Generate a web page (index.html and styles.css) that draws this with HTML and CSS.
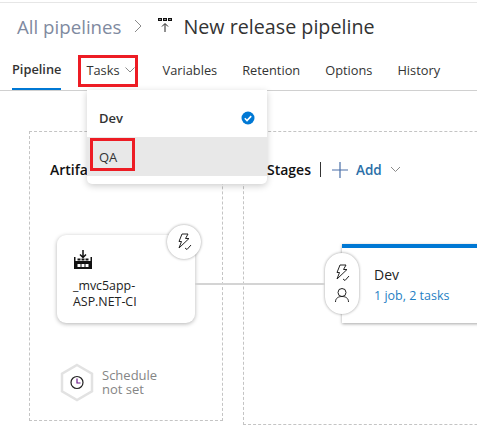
FILE: index.html
```html
<!DOCTYPE html>
<html lang="en">
<head>
  <meta charset="UTF-8">
  <title>New release pipeline</title>
  <link rel="stylesheet" href="styles.css">
</head>
<body>
  <div class="page">
    <header class="title-row">
      <span class="crumb">All pipelines</span>
      <svg class="crumb-sep" width="8" height="14" viewBox="0 0 8 14"><path d="M1 1l6 6-6 6" fill="none" stroke="#8a8a8a" stroke-width="1"/></svg>
      <svg class="title-icon" width="16" height="16" viewBox="0 0 16 16">
        <path d="M1 1h4v3H1zM6 1h4v3H6zM11 1h4v3h-4z" fill="#111"/>
        <path d="M2.500 2h1v1h-1zM7.500 2h1v1h-1zM12.500 2h1v1h-1z" fill="#fff"/>
        <path d="M8 15V7M5 9.500L8 6.500l3 3" fill="none" stroke="#222" stroke-width="1"/>
      </svg>
      <h1 class="title">New release pipeline</h1>
    </header>

    <nav class="tabs">
      <a class="tab tab-active">Pipeline</a>
      <a class="tab tab-tasks">Tasks
        <svg width="10" height="6" viewBox="0 0 10 6"><path d="M.5.5L5 5 9.500.5" fill="none" stroke="#8a8a8a"/></svg>
      </a>
      <a class="tab">Variables</a>
      <a class="tab">Retention</a>
      <a class="tab">Options</a>
      <a class="tab">History</a>
    </nav>

    <main class="canvas">
      <section class="panel panel-artifacts">
        <h2 class="panel-title">Artifacts</h2>

        <div class="artifact-card">
          <svg class="build-icon" width="20" height="20" viewBox="0 0 20 20">
            <path d="M10 0v7M7 4.500L10 7.500l3-3" fill="none" stroke="#111" stroke-width="1.500"/>
            <path d="M1 7h1.500v4h15V7H19v12H1z" fill="#111"/>
            <path d="M4.500 8.500h3v2h-3zM8.500 8.500h3v2h-3zM12.500 8.500h3v2h-3z" fill="#111"/>
            <path d="M4.500 14h3v3h-3zM8.500 14h3v3h-3zM12.500 14h3v3h-3z" fill="#fff"/>
          </svg>
          <div class="artifact-name">_mvc5app-<br>ASP.NET-CI</div>
          <span class="round-badge">
            <svg width="18" height="18" viewBox="0 0 18 18"><path d="M7 1h6l-2.500 4.500H14L4 15l2.500-6.500H4zM10 15l2 1.500 4-4.500" fill="none" stroke="#222" stroke-width="1"/></svg>
          </span>
        </div>

        <div class="schedule">
          <svg width="34" height="39" viewBox="0 0 34 39">
            <path d="M17 2l15 8.700v17.600L17 37 2 28.300V10.700z" fill="#fff" stroke="#e2e2e2" stroke-width="2.500"/>
            <circle cx="17" cy="19.500" r="6" fill="none" stroke="#222" stroke-width="1.200"/>
            <path d="M17 15.500v4.500h3.500" fill="none" stroke="#6b1a8a" stroke-width="1.200"/>
          </svg>
          <span class="schedule-text">Schedule<br>not set</span>
        </div>
      </section>

      <section class="panel panel-stages">
        <div class="stages-head">
          <h2 class="panel-title">Stages</h2>
          <span class="head-bar"></span>
          <svg class="head-plus" width="16" height="16" viewBox="0 0 16 16"><path d="M8 0v16M0 8h16" stroke="#4a6fa8" stroke-width="1.200"/></svg>
          <span class="add-label">Add</span>
          <svg width="11" height="7" viewBox="0 0 11 7"><path d="M1 1l4.500 4.500L10 1" fill="none" stroke="#8a8a8a"/></svg>
        </div>

        <div class="stage-card">
          <div class="stage-name">Dev</div>
          <div class="stage-link">1 job, 2 tasks</div>
        </div>
        <div class="stage-pill">
          <svg width="18" height="18" viewBox="0 0 18 18"><path d="M7 1h6l-2.500 4.500H14L4 15l2.500-6.500H4zM10 15l2 1.500 4-4.500" fill="none" stroke="#222" stroke-width="1"/></svg>
          <svg width="16" height="16" viewBox="0 0 16 16"><circle cx="8" cy="5.500" r="4" fill="none" stroke="#222"/><path d="M1.500 15c0-4 3-5.500 6.500-5.500s6.500 1.500 6.500 5.500" fill="none" stroke="#222"/></svg>
        </div>
      </section>

      <div class="connector"></div>
    </main>

    <div class="menu">
      <div class="menu-item menu-item-first">
        <span class="menu-bold">Dev</span>
        <svg width="14" height="14" viewBox="0 0 14 14"><circle cx="7" cy="7" r="6.500" fill="#0078d4"/><path d="M3.800 7.300l2.200 2.200 4.200-4.400" fill="none" stroke="#fff" stroke-width="1.600"/></svg>
      </div>
      <div class="menu-item menu-item-hover">QA</div>
    </div>

    <span class="mark mark-tasks"></span>
    <span class="mark mark-qa"></span>
  </div>
</body>
</html>
```

FILE: styles.css
```css
html, body {
  margin: 0;
  background-color: #fff;
}

.page {
  position: relative;
  width: 477px;
  height: 441px;
  overflow: hidden;
  font-family: "Open Sans", sans-serif;
  color: #222;
}

.title-row {
  display: flex;
  align-items: center;
  height: 46px;
  margin-top: 2px;
  padding-left: 17px;
  border-top: 1px solid #e6e6e6;
}

.crumb {
  font-size: 18.700px;
  color: #7f8aa0;
}

.crumb-sep {
  margin-left: 13px;
}

.title-icon {
  margin-left: 15px;
  margin-top: -2px;
}

.title {
  margin: 0 0 0 10px;
  font-size: 19.700px;
  font-weight: 400;
  color: #333;
}

.tabs {
  display: flex;
  height: 41px;
  padding-left: 12px;
  border-bottom: 1px solid #d0d0d0;
}

.tab {
  display: flex;
  flex: none;
  align-items: center;
  gap: 5px;
  height: 38px;
  margin-right: 25px;
  padding-top: 3px;
  box-sizing: border-box;
  font-size: 12.800px;
  color: #333;
}

.tab-active {
  height: 41px;
  padding-top: 1px;
  font-weight: 600;
  font-size: 12.800px;
  border-bottom: 2px solid #0078d4;
}

.tab-tasks {
  margin-right: 28px;
}

.canvas {
  position: relative;
  display: flex;
  gap: 20px;
  padding: 40px 0 0 29px;
}

.panel {
  position: relative;
  flex: none;
  box-sizing: border-box;
  border: 1px dashed #c4c4c4;
}

.panel-artifacts {
  width: 194px;
  height: 290px;
}

.panel-stages {
  width: 300px;
  height: 294px;
}

.panel-title {
  margin: 0;
  font-size: 14px;
  font-weight: 600;
  color: #111;
}

.panel-artifacts .panel-title {
  padding: 28px 0 0 20px;
}

.artifact-card {
  position: absolute;
  left: 27px;
  top: 103px;
  width: 138px;
  height: 88px;
  box-sizing: border-box;
  padding: 15px 0 0 16px;
  background-color: #fff;
  border-radius: 9px;
  box-shadow: 0 1px 4px rgba(0, 0, 0, 0.3);
}

.artifact-name {
  margin-top: 3px;
  font-size: 12.400px;
  line-height: 16px;
  color: #222;
}

.round-badge {
  position: absolute;
  right: -6px;
  top: -10px;
  display: flex;
  align-items: center;
  justify-content: center;
  width: 34px;
  height: 34px;
  background-color: #fff;
  border-radius: 50%;
  box-shadow: 0 0 3px rgba(0, 0, 0, 0.4);
}

.schedule {
  position: absolute;
  left: 30px;
  top: 231px;
  display: flex;
  align-items: center;
  gap: 8px;
}

.schedule-text {
  margin-top: -2px;
  font-size: 13px;
  line-height: 14px;
  color: #858585;
}

.stages-head {
  display: flex;
  align-items: center;
  gap: 8px;
  padding: 28px 0 0 23px;
}

.head-bar {
  width: 1px;
  height: 15px;
  margin-left: 1px;
  background-color: #333;
}

.head-plus {
  margin-left: 3px;
}

.add-label {
  font-size: 13.500px;
  font-weight: 600;
  color: #2b6fa8;
}

.stage-card {
  position: absolute;
  left: 98px;
  top: 112px;
  width: 160px;
  height: 79px;
  box-sizing: border-box;
  padding: 17px 0 0 32px;
  background-color: #fff;
  border-top: 4px solid #0078d4;
  box-shadow: 0 1px 3px rgba(0, 0, 0, 0.35);
}

.stage-name {
  font-size: 14px;
  line-height: 20px;
  color: #222;
}

.stage-link {
  margin-top: 2px;
  font-size: 12.500px;
  line-height: 18px;
  color: #1f7fc4;
}

.stage-pill {
  position: absolute;
  left: 81px;
  top: 121px;
  display: flex;
  flex-direction: column;
  align-items: center;
  justify-content: center;
  gap: 5px;
  width: 34px;
  height: 61px;
  background-color: #fff;
  border-radius: 17px;
  box-shadow: 0 0 3px rgba(0, 0, 0, 0.4);
}

.connector {
  position: absolute;
  left: 195px;
  top: 192px;
  width: 130px;
  height: 2px;
  background-color: #d4d4d4;
}

.menu {
  position: absolute;
  left: 87px;
  top: 90px;
  width: 180px;
  height: 94px;
  background-color: #fff;
  border-radius: 0 0 5px 5px;
  box-shadow: 0 2px 7px rgba(0, 0, 0, 0.2);
}

.menu-item {
  display: flex;
  align-items: center;
  justify-content: space-between;
  padding: 0 12px;
  font-size: 13px;
  color: #333;
}

.menu-item-first {
  height: 47px;
  padding-top: 8px;
  box-sizing: border-box;
}

.menu-item-hover {
  height: 39px;
  background-color: #e8e8e8;
}

.menu-bold {
  font-weight: 600;
}

.mark {
  position: absolute;
  box-sizing: border-box;
  border: 3px solid #ed1c24;
}

.mark-tasks {
  left: 78px;
  top: 55px;
  width: 60px;
  height: 32px;
}

.mark-qa {
  left: 90px;
  top: 138px;
  width: 45px;
  height: 33px;
}
```
